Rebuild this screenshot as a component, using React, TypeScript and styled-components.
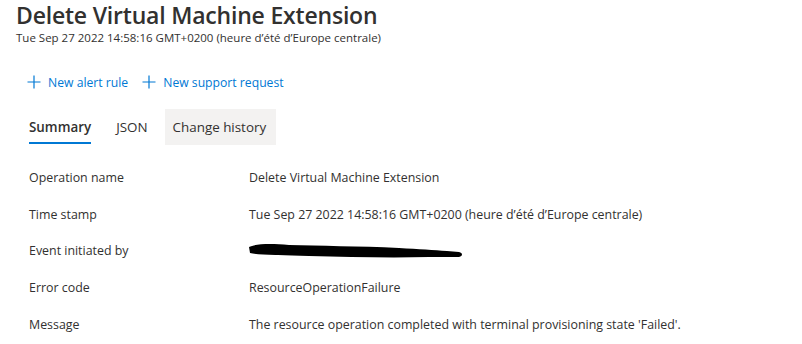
import React from 'react';
import styled, { createGlobalStyle } from 'styled-components';

const TEXT = '#323130';
const BLUE = '#0078d4';

const GlobalStyle = createGlobalStyle`
  body {
    margin: 0;
    background: #ffffff;
    font-family: "Open Sans", "Noto Sans", sans-serif;
    color: ${TEXT};
  }
`;

const Page = styled.div`
  width: 802px;
  height: 344px;
  overflow: hidden;
  padding: 0 16px;
  box-sizing: border-box;
`;

const Title = styled.h1`
  margin: 0;
  font-size: 23px;
  font-weight: 600;
  line-height: 31px;
  letter-spacing: -0.2px;
`;

const Subtitle = styled.div`
  font-size: 11.5px;
  line-height: 16px;
  margin-top: -1px;
`;

const CommandBar = styled.div`
  display: flex;
  gap: 14px;
  margin-top: 26px;
  padding-left: 11px;
  height: 20px;
  align-items: center;
`;

const CommandButton = styled.button`
  display: flex;
  align-items: center;
  gap: 7px;
  border: none;
  background: none;
  padding: 0;
  color: ${BLUE};
  font-family: inherit;
  font-size: 12.2px;
  cursor: pointer;
`;

const Tabs = styled.div`
  display: flex;
  margin-top: 17px;
  padding-left: 5px;
  height: 36px;
`;

const Tab = styled.div<{ selected?: boolean; hovered?: boolean }>`
  position: relative;
  display: flex;
  align-items: center;
  padding: 0 ${({ hovered }) => (hovered ? '10px' : '8px')} 0 8px;
  margin-right: ${({ hovered }) => (hovered ? '0' : '9px')};
  font-size: 13.4px;
  font-weight: ${({ selected }) => (selected ? 600 : 400)};
  background: ${({ hovered }) => (hovered ? '#f3f2f1' : 'transparent')};
  &::after {
    content: '';
    display: ${({ selected }) => (selected ? 'block' : 'none')};
    position: absolute;
    left: 8px;
    right: 8px;
    bottom: 1px;
    height: 2px;
    background: ${BLUE};
  }
`;

const Details = styled.div`
  display: grid;
  grid-template-columns: 220px 1fr;
  grid-auto-rows: 36.8px;
  margin-top: 14px;
  padding-left: 13px;
  align-items: center;
  font-size: 12.4px;
`;

const Label = styled.div``;

const Value = styled.div`
  display: flex;
  align-items: center;
  min-height: 18px;
`;

const PlusIcon = () => (
  <svg width="14" height="14" viewBox="0 0 14 14">
    <path d="M7 0.5v13M0.5 7h13" stroke={BLUE} strokeWidth="1.2" fill="none" />
  </svg>
);

const Scribble = () => (
  <svg width="214" height="16" viewBox="0 0 214 16">
    <path
      d="M0 4 C6 1 20 0 40 2 C70 3 110 3 150 5 C170 6 185 7 198 8 L210 9 C214 10 214 13 210 14 L180 14 C140 15 100 14 60 13 C30 12 10 12 1 10 Z"
      fill="#000"
    />
  </svg>
);

const rows = [
  ['Operation name', 'Delete Virtual Machine Extension'],
  ['Time stamp', "Tue Sep 27 2022 14:58:16 GMT+0200 (heure d’été d’Europe centrale)"],
  ['Event initiated by', null],
  ['Error code', 'ResourceOperationFailure'],
  ['Message', "The resource operation completed with terminal provisioning state 'Failed'."],
];

export default function App() {
  return (
    <Page>
      <GlobalStyle />
      <Title>Delete Virtual Machine Extension</Title>
      <Subtitle>Tue Sep 27 2022 14:58:16 GMT+0200 (heure d’été d’Europe centrale)</Subtitle>
      <CommandBar>
        <CommandButton>
          <PlusIcon />
          New alert rule
        </CommandButton>
        <CommandButton>
          <PlusIcon />
          New support request
        </CommandButton>
      </CommandBar>
      <Tabs>
        <Tab selected>Summary</Tab>
        <Tab>JSON</Tab>
        <Tab hovered>Change history</Tab>
      </Tabs>
      <Details>
        {rows.map(([label, value]) => (
          <React.Fragment key={label as string}>
            <Label>{label}</Label>
            <Value>{value ?? <Scribble />}</Value>
          </React.Fragment>
        ))}
      </Details>
    </Page>
  );
}
